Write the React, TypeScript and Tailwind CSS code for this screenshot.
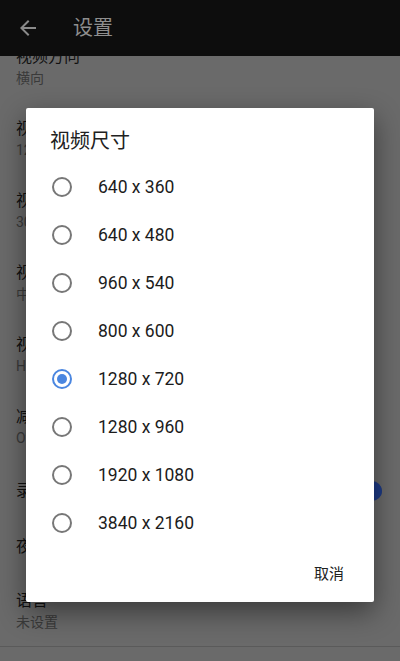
import React, { useState } from 'react';

const sizes = [
  '640 x 360',
  '640 x 480',
  '960 x 540',
  '800 x 600',
  '1280 x 720',
  '1280 x 960',
  '1920 x 1080',
  '3840 x 2160',
];

type Setting = { title: string; summary?: string; toggle?: boolean };

const settings: Setting[] = [
  { title: '视频方向', summary: '横向' },
  { title: '视频尺寸', summary: '1280 x 720' },
  { title: '视频帧率', summary: '30 fps' },
  { title: '视频质量', summary: '中' },
  { title: '视频编码', summary: 'H.264' },
  { title: '减少噪音', summary: 'Off' },
  { title: '录制音频', toggle: true },
  { title: '夜间模式' },
  { title: '语言', summary: '未设置' },
];

function SettingRow({ item, last }: { item: Setting; last: boolean }) {
  if (!item.summary) {
    return (
      <div className="h-14 px-4 flex items-center justify-between">
        <span className="text-[16px] leading-[22px] text-[#111111]">{item.title}</span>
        {item.toggle && (
          <div className="relative w-[36px] h-5 mr-[2px] flex items-center">
            <div className="w-full h-[14px] rounded-full bg-[#2c3f66]" />
            <div className="absolute right-0 top-0 w-5 h-5 rounded-full bg-[#1d3a86]" />
          </div>
        )}
      </div>
    );
  }
  return (
    <div className={`h-[72px] px-4 flex flex-col justify-center ${last ? 'border-b border-[#5a5a5a]' : ''}`}>
      <span className="text-[16px] leading-[22px] text-[#111111]">{item.title}</span>
      <span className="text-[14px] leading-5 text-[#3a3a3a]">{item.summary}</span>
    </div>
  );
}

export default function App() {
  const [selected, setSelected] = useState(4);

  return (
    <div className="relative w-[400px] h-[661px] overflow-hidden bg-[#6a6a6a] font-['Roboto','Noto_Sans_CJK_SC',sans-serif]">
      {/* Top bar */}
      <div className="h-14 bg-[#0d0d0d] flex items-center">
        <svg viewBox="0 0 24 24" className="w-6 h-6 ml-4 fill-[#8a8a8a]">
          <path d="M20 11H7.83l5.59-5.59L12 4l-8 8 8 8 1.41-1.41L7.83 13H20v-2z" />
        </svg>
        <span className="ml-[33px] text-[20px] text-[#8e8e8e]">设置</span>
      </div>

      {/* Settings list (scrolled) */}
      <div className="h-[605px] overflow-hidden">
        <div className="-mt-[25px]">
          {settings.map((s, i) => (
            <SettingRow key={s.title} item={s} last={i === settings.length - 1} />
          ))}
        </div>
      </div>

      {/* Dialog */}
      <div className="absolute left-[26px] top-[108px] w-[348px] h-[494px] bg-white rounded-[2px] shadow-[0_10px_28px_rgba(0,0,0,0.45)] flex flex-col">
        <div className="h-[55px] px-6 pt-[21px]">
          <h2 className="text-[20px] leading-6 text-[#212121]">视频尺寸</h2>
        </div>
        <div className="flex flex-col">
          {sizes.map((s, i) => (
            <button
              key={s}
              onClick={() => setSelected(i)}
              className="h-12 pl-6 flex items-center text-left"
            >
              <span className="w-6 h-6 flex items-center justify-center">
                {selected === i ? (
                  <span className="w-5 h-5 rounded-full border-2 border-[#4a86e0] flex items-center justify-center">
                    <span className="w-[10px] h-[10px] rounded-full bg-[#4a86e0]" />
                  </span>
                ) : (
                  <span className="w-5 h-5 rounded-full border-2 border-[#777777]" />
                )}
              </span>
              <span className="ml-6 text-[17.5px] text-[#1c1c1c]">{s}</span>
            </button>
          ))}
        </div>
        <div className="flex-1 flex items-center justify-end pr-[22px]">
          <button className="px-2 text-[15px] text-[#212121]">取消</button>
        </div>
      </div>
    </div>
  );
}
